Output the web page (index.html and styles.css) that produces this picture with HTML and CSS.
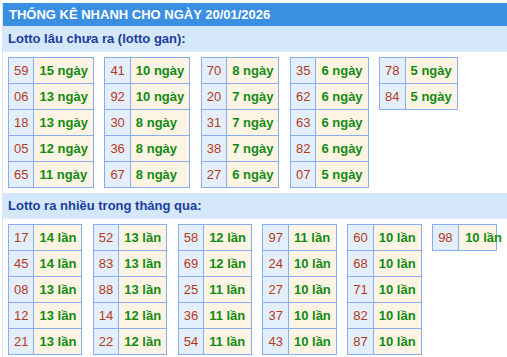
FILE: index.html
```html
<!DOCTYPE html>
<html lang="vi">
<head>
<meta charset="utf-8">
<title>Thống kê nhanh</title>
<link rel="stylesheet" href="styles.css">
</head>
<body>
<div class="box">
  <div class="title">THỐNG KÊ NHANH CHO NGÀY 20/01/2026</div>
  <div class="sub">Lotto lâu chưa ra (lotto gan):</div>
  <div class="grid">
    <table class="lt">
      <tr><td class="n">59</td><td class="v">15 ngày</td></tr>
      <tr><td class="n">06</td><td class="v">13 ngày</td></tr>
      <tr><td class="n">18</td><td class="v">13 ngày</td></tr>
      <tr><td class="n">05</td><td class="v">12 ngày</td></tr>
      <tr><td class="n">65</td><td class="v">11 ngày</td></tr>
    </table>
    <table class="lt">
      <tr><td class="n">41</td><td class="v">10 ngày</td></tr>
      <tr><td class="n">92</td><td class="v">10 ngày</td></tr>
      <tr><td class="n">30</td><td class="v">8 ngày</td></tr>
      <tr><td class="n">36</td><td class="v">8 ngày</td></tr>
      <tr><td class="n">67</td><td class="v">8 ngày</td></tr>
    </table>
    <table class="lt">
      <tr><td class="n">70</td><td class="v">8 ngày</td></tr>
      <tr><td class="n">20</td><td class="v">7 ngày</td></tr>
      <tr><td class="n">31</td><td class="v">7 ngày</td></tr>
      <tr><td class="n">38</td><td class="v">7 ngày</td></tr>
      <tr><td class="n">27</td><td class="v">6 ngày</td></tr>
    </table>
    <table class="lt">
      <tr><td class="n">35</td><td class="v">6 ngày</td></tr>
      <tr><td class="n">62</td><td class="v">6 ngày</td></tr>
      <tr><td class="n">63</td><td class="v">6 ngày</td></tr>
      <tr><td class="n">82</td><td class="v">6 ngày</td></tr>
      <tr><td class="n">07</td><td class="v">5 ngày</td></tr>
    </table>
    <table class="lt">
      <tr><td class="n">78</td><td class="v">5 ngày</td></tr>
      <tr><td class="n">84</td><td class="v">5 ngày</td></tr>
    </table>
  </div>
  <div class="sub">Lotto ra nhiều trong tháng qua:</div>
  <div class="grid">
    <table class="lt">
      <tr><td class="n">17</td><td class="v">14 lần</td></tr>
      <tr><td class="n">45</td><td class="v">14 lần</td></tr>
      <tr><td class="n">08</td><td class="v">13 lần</td></tr>
      <tr><td class="n">12</td><td class="v">13 lần</td></tr>
      <tr><td class="n">21</td><td class="v">13 lần</td></tr>
    </table>
    <table class="lt">
      <tr><td class="n">52</td><td class="v">13 lần</td></tr>
      <tr><td class="n">83</td><td class="v">13 lần</td></tr>
      <tr><td class="n">88</td><td class="v">13 lần</td></tr>
      <tr><td class="n">14</td><td class="v">12 lần</td></tr>
      <tr><td class="n">22</td><td class="v">12 lần</td></tr>
    </table>
    <table class="lt">
      <tr><td class="n">58</td><td class="v">12 lần</td></tr>
      <tr><td class="n">69</td><td class="v">12 lần</td></tr>
      <tr><td class="n">25</td><td class="v">11 lần</td></tr>
      <tr><td class="n">36</td><td class="v">11 lần</td></tr>
      <tr><td class="n">54</td><td class="v">11 lần</td></tr>
    </table>
    <table class="lt">
      <tr><td class="n">97</td><td class="v">11 lần</td></tr>
      <tr><td class="n">24</td><td class="v">10 lần</td></tr>
      <tr><td class="n">27</td><td class="v">10 lần</td></tr>
      <tr><td class="n">37</td><td class="v">10 lần</td></tr>
      <tr><td class="n">43</td><td class="v">10 lần</td></tr>
    </table>
    <table class="lt">
      <tr><td class="n">60</td><td class="v">10 lần</td></tr>
      <tr><td class="n">68</td><td class="v">10 lần</td></tr>
      <tr><td class="n">71</td><td class="v">10 lần</td></tr>
      <tr><td class="n">82</td><td class="v">10 lần</td></tr>
      <tr><td class="n">87</td><td class="v">10 lần</td></tr>
    </table>
    <table class="lt tight">
      <tr><td class="n">98</td><td class="v">10 lần</td></tr>
    </table>
  </div>
</div>
</body>
</html>
```

FILE: styles.css
```css
html, body {
  margin: 0;
  padding: 0;
  background: #ffffff;
}
body {
  font-family: "Liberation Sans", Arial, sans-serif;
  font-size: 13px;
}
.box {
  margin: 3px 0 0 2px;
  border-left: 1px solid #d5e3f3;
}
.title {
  background: #3b8fe0;
  color: #ffffff;
  font-weight: bold;
  line-height: 15px;
  padding: 4px 6px;
}
.sub {
  background: #d4e7fb;
  color: #1c3d9c;
  font-weight: bold;
  line-height: 15px;
  padding: 5px 6px 5px 5px;
  border-bottom: 1px solid #e4eef9;
}
.grid {
  display: flex;
  flex-wrap: nowrap;
  align-items: flex-start;
  gap: 10.5px;
  padding: 5px 0 5px 5px;
}
.lt {
  flex-shrink: 0;
  border-collapse: collapse;
}
.lt td {
  border: 1px solid #89aef0;
  padding: 5px;
  white-space: nowrap;
}
.lt .n {
  background: #e3effc;
  color: #b7391b;
}
.lt .v {
  background: #fdf4e3;
  color: #138b13;
  font-weight: bold;
}
.lt.tight {
  table-layout: fixed;
  width: 65px;
}
.lt.tight .n {
  width: 15px;
}
.lt.tight .v {
  padding-left: 6px;
  padding-right: 0;
}
```
